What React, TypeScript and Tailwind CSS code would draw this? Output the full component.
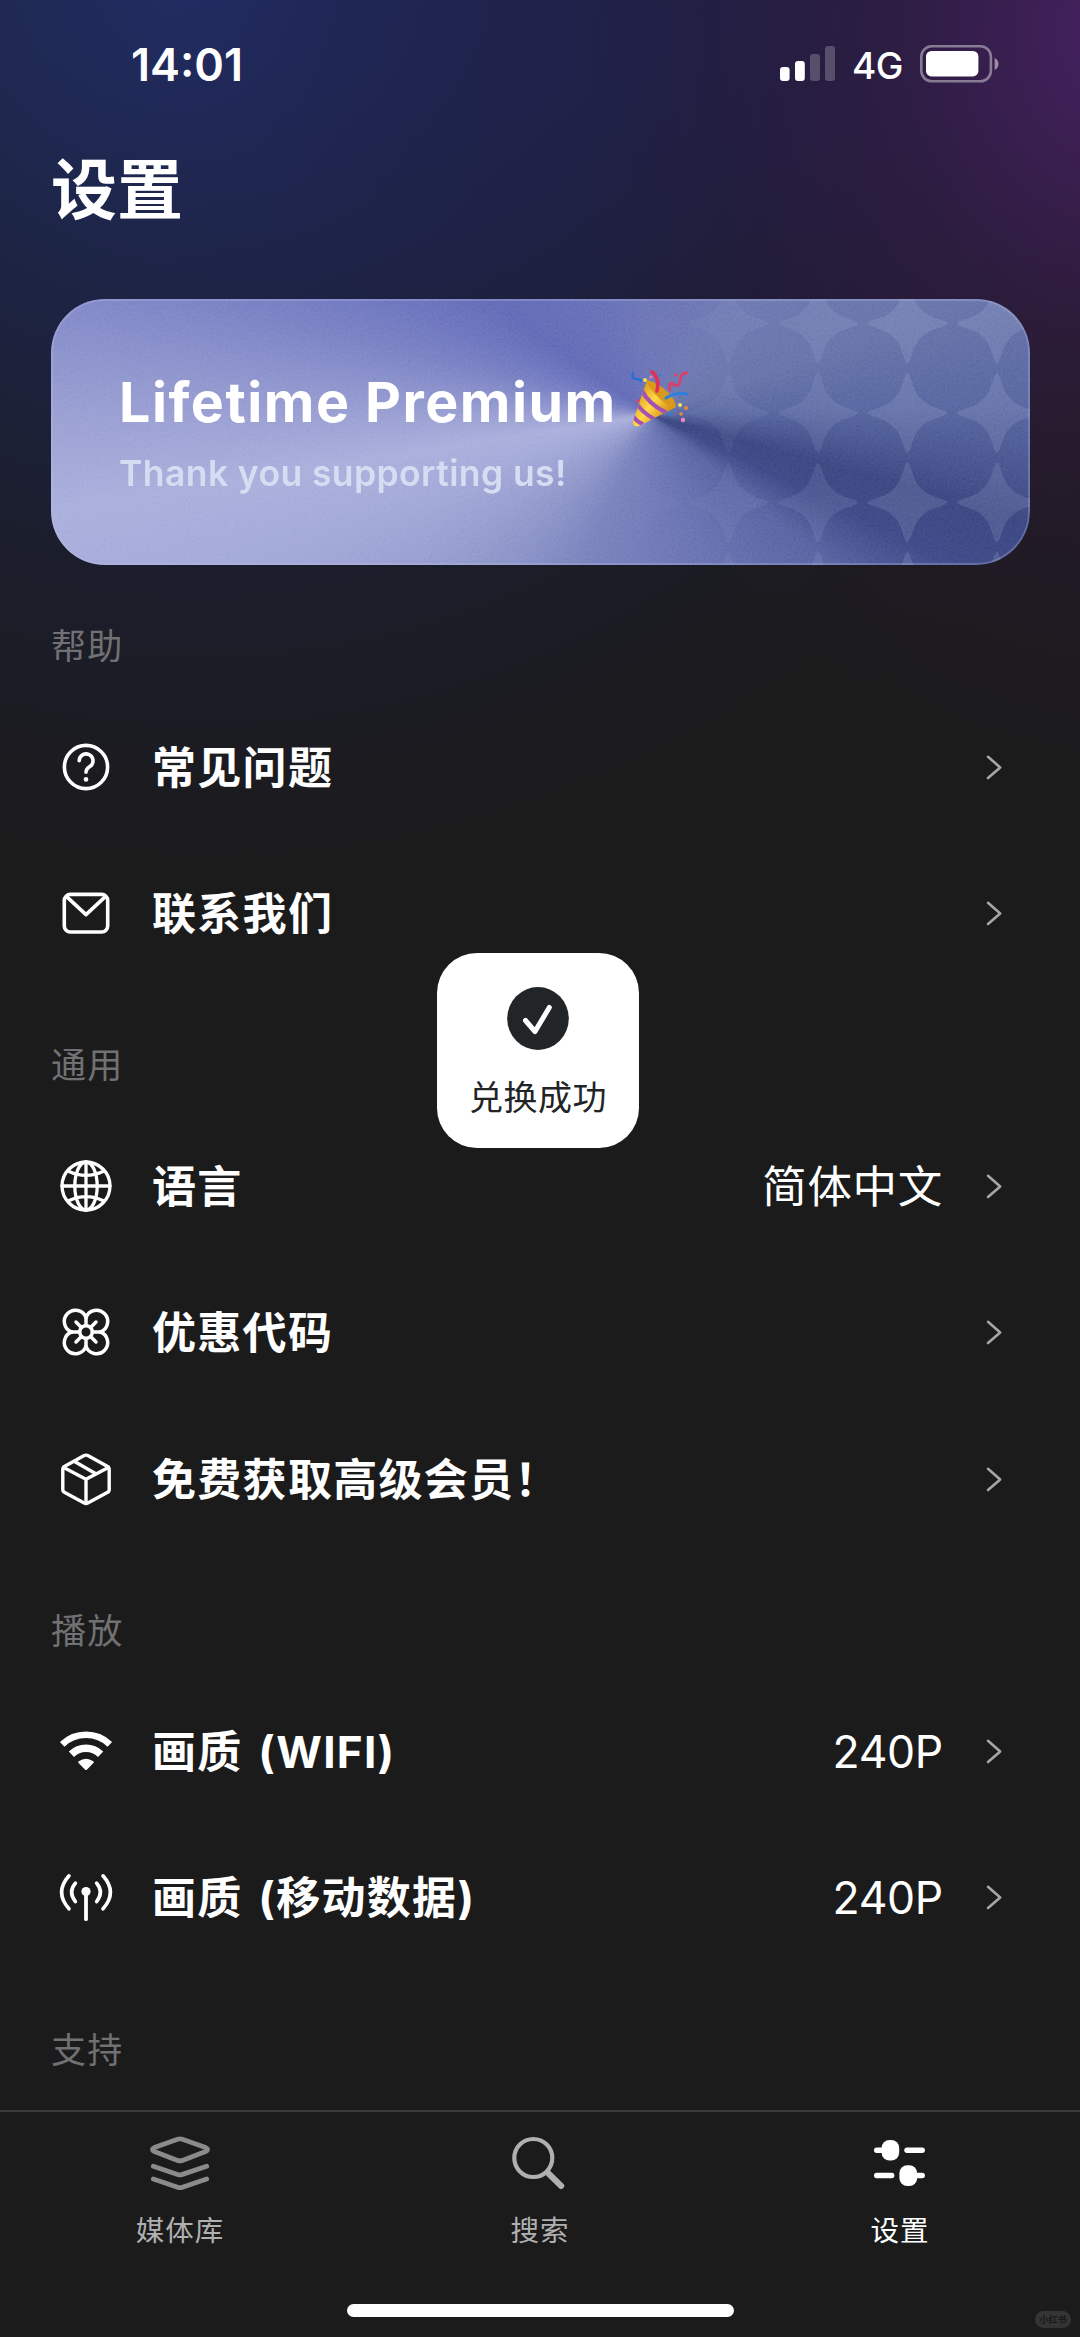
import type { ReactNode } from 'react';

type SettingItem = {
  title: string;
  icon: ReactNode;
  value?: string;
};

type SettingSection = {
  label: string;
  items: SettingItem[];
};

type RowIconProps = {
  children: ReactNode;
  strokeWidth?: number;
};

function RowIcon({ children, strokeWidth = 3.6 }: RowIconProps) {
  return (
    <svg
      viewBox="0 0 52 52"
      className="w-[52px] h-[52px] shrink-0 overflow-visible"
      fill="none"
      stroke="currentColor"
      strokeWidth={strokeWidth}
      strokeLinecap="round"
      strokeLinejoin="round"
    >
      {children}
    </svg>
  );
}

const HelpIcon = () => (
  <RowIcon>
    <circle cx="26" cy="26" r="21.6" />
    <path d="M19.2 19.8a6.9 6.9 0 1 1 10.6 5.8c-2.4 1.6-3.8 2.7-3.8 5.6" />
    <circle cx="26" cy="38.4" r="2.3" fill="currentColor" stroke="none" />
  </RowIcon>
);

const MailIcon = () => (
  <RowIcon>
    <rect x="4.3" y="7.4" width="43.4" height="37.6" rx="6" />
    <path d="M6.6 9.6 26 27.6 45.4 9.6" />
  </RowIcon>
);

const GlobeIcon = () => (
  <RowIcon strokeWidth={3.3}>
    <circle cx="26" cy="26" r="24" />
    <ellipse cx="26" cy="26" rx="11.2" ry="24" />
    <path d="M26 2v48M2 26h48M8.6 11.2q17.4 8.4 34.8 0M8.6 40.8q17.4-8.4 34.8 0" />
  </RowIcon>
);

const CloverIcon = () => (
  <RowIcon strokeWidth={3.5}>
    <path d="M26 11.6A11.2 11.2 0 1 0 11.6 26A11.2 11.2 0 1 0 26 40.4A11.2 11.2 0 1 0 40.4 26A11.2 11.2 0 1 0 26 11.6Z" />
    <circle cx="26" cy="26" r="6.3" />
    <path d="M26 11.6v8M26 32.4v8M11.6 26h8M32.4 26h8M16 16l5.4 5.4M36 16l-5.4 5.4M16 36l5.4-5.4M36 36l-5.4-5.4" />
  </RowIcon>
);

const BoxIcon = () => (
  <RowIcon strokeWidth={3.4}>
    <path d="M24.2 2.6a4 4 0 0 1 3.6 0l19.4 10.6a3.6 3.6 0 0 1 2 3.2v20a3.6 3.6 0 0 1-2 3.2L27.8 50a4 4 0 0 1-3.6 0L4.8 39.6a3.6 3.6 0 0 1-2-3.2v-20a3.6 3.6 0 0 1 2-3.2z" />
    <path d="M3.6 14.4 26 26.2l22.4-11.8M26 26.2v24M15 8.8l20.4 11.6" />
  </RowIcon>
);

const WifiIcon = () => (
  <RowIcon>
    <path d="M2.2 19.3a34.5 34.5 0 0 1 47.6 0" strokeWidth="6.6" strokeLinecap="butt" />
    <path d="M11.4 29.2a21 21 0 0 1 29.2 0" strokeWidth="7.6" strokeLinecap="butt" />
    <path d="M26 43.8 19.4 37.2q6.6-4.6 13.2 0z" fill="currentColor" strokeWidth="2.4" />
  </RowIcon>
);

const AntennaIcon = () => (
  <RowIcon>
    <circle cx="26" cy="20.6" r="4.6" fill="currentColor" stroke="none" />
    <path d="M26 21v27.2" strokeWidth="3.8" />
    <path d="M9 4.8q-14.8 16.6 0 33M43 4.8q14.8 16.6 0 33M15.4 12.2q-7.6 9 0 18.4M36.6 12.2q7.6 9 0 18.4" />
  </RowIcon>
);

const sections: SettingSection[] = [
  {
    label: '帮助',
    items: [
      { title: '常见问题', icon: <HelpIcon /> },
      { title: '联系我们', icon: <MailIcon /> },
    ],
  },
  {
    label: '通用',
    items: [
      { title: '语言', icon: <GlobeIcon />, value: '简体中文' },
      { title: '优惠代码', icon: <CloverIcon /> },
      { title: '免费获取高级会员！', icon: <BoxIcon /> },
    ],
  },
  {
    label: '播放',
    items: [
      { title: '画质 (WIFI)', icon: <WifiIcon />, value: '240P' },
      { title: '画质 (移动数据)', icon: <AntennaIcon />, value: '240P' },
    ],
  },
  { label: '支持', items: [] },
];

function StatusBar() {
  return (
    <div className="h-[128px] shrink-0 flex items-center justify-between pl-[131px] pr-[80px]">
      <span className="text-[45px] leading-none font-semibold">14:01</span>
      <div className="flex items-center">
        <svg viewBox="0 0 56 36" className="w-[56px] h-[36px]" fill="currentColor">
          <rect x="0" y="21" width="9.6" height="14" rx="3" />
          <rect x="15" y="15" width="9.8" height="20" rx="3" />
          <rect x="30" y="8" width="10" height="27" rx="3" opacity="0.22" />
          <rect x="45" y="0" width="10" height="35" rx="3" opacity="0.22" />
        </svg>
        <span className="ml-[16px] mt-[3px] text-[37px] leading-none font-medium tracking-[-0.5px] w-[52px]">4G</span>
        <svg viewBox="0 0 80 38" className="ml-[16px] w-[80px] h-[38px]" fill="currentColor">
          <rect x="1.3" y="1.3" width="69.6" height="35" rx="10.5" fill="none" stroke="currentColor" strokeWidth="2.6" opacity="0.42" />
          <rect x="6" y="6" width="52.4" height="25.4" rx="5.5" />
          <path d="M74.6 13v12c5.2-2 5.2-10 0-12z" opacity="0.5" />
        </svg>
      </div>
    </div>
  );
}

// columns and rows of the four-pointed stars on the banner
const starColumns = [588, 677.5, 767, 856.5, 946];
const starRows = [24.5, 114, 203.5, 293];

function BannerPattern() {
  return (
    <svg viewBox="0 0 979 266" preserveAspectRatio="none" className="absolute inset-0 w-full h-full">
      <defs>
        <linearGradient id="starFade" gradientUnits="userSpaceOnUse" x1="560" y1="0" x2="840" y2="0">
          <stop offset="0" stopColor="#fff" stopOpacity="0" />
          <stop offset="1" stopColor="#fff" stopOpacity="1" />
        </linearGradient>
        <mask id="starMask">
          <rect width="979" height="266" fill="url(#starFade)" />
        </mask>
        <filter id="grain" x="0" y="0" width="100%" height="100%">
          <feTurbulence type="fractalNoise" baseFrequency="0.45" numOctaves="2" stitchTiles="stitch" />
          <feColorMatrix type="matrix" values="0.6 0.6 0 0 -0.14 0.6 0.6 0 0 -0.14 0.6 0.6 0 0 -0.14 0 0 0 0 1" />
        </filter>
      </defs>
      <g mask="url(#starMask)" fill="#c5d3ee" fillOpacity="0.14">
        {starRows.map((y) =>
          starColumns.map((x) => (
            <path
              key={`${x}-${y}`}
              transform={`translate(${x} ${y})`}
              d="M0-40C4-39 5-21 14-14C21-5 39-4 40 0C39 4 21 5 14 14C5 21 4 39 0 40C-4 39-5 21-14 14C-21 5-39 4-40 0C-39-4-21-5-14-14C-5-21-4-39 0-40Z"
            />
          )),
        )}
      </g>
      <rect width="979" height="266" filter="url(#grain)" className="mix-blend-soft-light" opacity="0.25" />
    </svg>
  );
}

function PartyPopper() {
  return (
    <svg viewBox="0 0 58 58" className="-mt-[7px] w-[58px] h-[58px] shrink-0" fill="none" strokeLinecap="round">
      <defs>
        <linearGradient id="cone" x1="8" y1="24" x2="34" y2="42" gradientUnits="userSpaceOnUse">
          <stop offset="0" stopColor="#e0a01d" />
          <stop offset="0.5" stopColor="#ffd94a" />
          <stop offset="1" stopColor="#dc9a1a" />
        </linearGradient>
        <clipPath id="coneClip">
          <path d="M16 10C27 15 40 26 45 37L8 56C4 57 1 55 2 51Z" />
        </clipPath>
      </defs>
      <g clipPath="url(#coneClip)">
        <rect width="58" height="58" fill="url(#cone)" />
        <path d="M11 21Q18 34 34 42M6 34Q11 42 23 49M2 46Q5 51 11 54" stroke="#a550b5" strokeWidth="4.2" />
      </g>
      <path d="M16 10C27 12 42 24 45 35C43 40 34 34 27 27C20 20 14 13 16 10Z" fill="#d8991c" />
      <path d="M21 2C26 5 28 13 26 21" stroke="#e52e55" strokeWidth="3.6" />
      <path d="M35 28Q44 22 56 24" stroke="#2f7fe0" strokeWidth="3.2" />
      <path d="M39 20Q37 11 42 14T48 14T50 7T56 3" stroke="#d8406d" strokeWidth="2.8" />
      <path d="M2 3Q0 9 5 9T10 11" stroke="#2b6fd4" strokeWidth="2.6" />
      <circle cx="14" cy="10" r="2" fill="#f6e04e" />
      <circle cx="20" cy="7" r="1.6" fill="#ef7fa8" />
      <circle cx="29" cy="5" r="1.5" fill="#2f7fe0" />
      <circle cx="45" cy="5" r="1.8" fill="#e0436c" />
      <circle cx="7" cy="31" r="1.8" fill="#e0436c" />
      <circle cx="49" cy="35" r="2" fill="#f1e265" />
      <circle cx="55" cy="38" r="2" fill="#e58a3a" />
      <circle cx="50" cy="44" r="1.8" fill="#e58a3a" />
      <circle cx="39" cy="44" r="1.8" fill="#2f7fe0" />
      <circle cx="52" cy="50" r="2.2" fill="#ee86c6" />
    </svg>
  );
}

function PremiumBanner() {
  return (
    <div className="relative ml-[51px] mr-[50px] h-[266px] shrink-0 rounded-[54px] overflow-hidden bg-[conic-gradient(from_0deg_at_600px_116px,#6972b4_0deg,#6b76b0_40deg,#6472a8_70deg,#56649f_88deg,#38447f_106deg,#3b4785_116deg,#5562a0_130deg,#6670b0_160deg,#7780bb_205deg,#9098cb_232deg,#a2a8d8_252deg,#a8addb_261deg,#979dd1_270deg,#878eca_277deg,#7880c3_284deg,#6b73bd_293deg,#6068b5_305deg,#636cb6_325deg,#6972b4_360deg)]">
      <BannerPattern />
      <div className="absolute inset-0 rounded-[54px] border-2 border-[#b9bde8]/30" />
      <div className="relative pl-[68px] pt-[70px]">
        <div className="flex items-center h-[66px]">
          <h2 className="text-[55.5px] leading-[66px] font-bold tracking-[1.5px] whitespace-nowrap w-[512px]">Lifetime Premium</h2>
          <PartyPopper />
        </div>
        <p className="mt-[15px] text-[35.5px] leading-[48px] font-semibold text-[#d6dcf2] tracking-[0.4px]">
          Thank you supporting us!
        </p>
      </div>
    </div>
  );
}

function SettingRow({ title, icon, value }: SettingItem) {
  return (
    <li className="h-[146.4px] flex items-center pl-[60px] pr-[77px]">
      {icon}
      <span className="ml-[40px] mt-[2px] flex-1 text-[44px] leading-[60px] font-bold tracking-[1.3px] [word-spacing:4px]">
        {title}
      </span>
      {value ? (
        <span className={`mt-[2px] text-[44.5px] leading-[60px] ${value === '240P' ? 'tracking-[-0.3px]' : 'tracking-[0.7px]'}`}>
          {value}
        </span>
      ) : null}
      <svg
        viewBox="0 0 18 26"
        className="ml-[42px] w-[18px] h-[26px] text-[#a6a6a6]"
        fill="none"
        stroke="currentColor"
        strokeWidth="2.6"
        strokeLinecap="round"
        strokeLinejoin="round"
      >
        <path d="M3 2.8 15.2 13.4 3 24" />
      </svg>
    </li>
  );
}

function TabBar() {
  return (
    <nav className="h-[227px] shrink-0 flex flex-col border-t-2 border-[#3b3b3c] bg-[#1b1b1b]">
      <div className="grid grid-cols-3 text-[28.5px] leading-[40px] tracking-[1px]">
        <a className="flex flex-col items-center pt-[24px] text-[#b0b0b1]">
          <svg
            viewBox="0 0 60 54"
            className="w-[60px] h-[54px] text-[#8b8b8c]"
            fill="none"
            stroke="currentColor"
            strokeWidth="4.8"
            strokeLinecap="round"
            strokeLinejoin="round"
          >
            <path d="M27.6 3.3q2.4-.8 4.8 0L55.6 11.6q4 2 0 4L32.4 24.4q-2.4.8-4.8 0L4.4 15.6q-4-2 0-4z" />
            <path d="M3.3 30.2 27.6 38.4q2.4.8 4.8 0L56.7 30.2M3.3 43 27.6 51.2q2.4.8 4.8 0L56.7 43" />
          </svg>
          <span className="mt-[21px]">媒体库</span>
        </a>
        <a className="flex flex-col items-center pt-[24px] text-[#b0b0b1]">
          <svg viewBox="0 0 54 54" className="w-[54px] h-[54px] mr-1" fill="none" stroke="currentColor" strokeLinecap="round">
            <circle cx="22.3" cy="22" r="19" strokeWidth="4.2" />
            <path d="M36.5 36.5 50.2 50" strokeWidth="6" />
          </svg>
          <span className="mt-[21px]">搜索</span>
        </a>
        <a className="flex flex-col items-center pt-[24px] text-white">
          <svg viewBox="0 0 54 54" className="w-[54px] h-[54px]" fill="currentColor">
            <rect x="1" y="11.6" width="14" height="5.4" rx="2.7" />
            <rect x="8.6" y="4" width="17.6" height="20.6" rx="8" />
            <rect x="31.3" y="11.6" width="20.6" height="5.4" rx="2.7" />
            <rect x="1" y="36.8" width="20.4" height="5.4" rx="2.7" />
            <rect x="26.4" y="29.2" width="17.8" height="20.8" rx="8" />
            <rect x="38" y="36.8" width="13.9" height="5.4" rx="2.7" />
          </svg>
          <span className="mt-[21px]">设置</span>
        </a>
      </div>
      <div className="mt-auto mb-[20px] mx-auto w-[387px] h-[13px] rounded-full bg-white" />
    </nav>
  );
}

function Toast() {
  return (
    <div className="absolute left-[437px] top-[953px] w-[202px] h-[195px] rounded-[40px] bg-white flex flex-col items-center pt-[34px]">
      <svg viewBox="0 0 62 63" className="w-[62px] h-[63px]">
        <ellipse cx="31" cy="31.5" rx="30.8" ry="31.5" fill="#212527" />
        <path
          d="M18.5 33.5 28 44.5 42.3 20.5"
          fill="none"
          stroke="#fff"
          strokeWidth="5"
          strokeLinecap="round"
          strokeLinejoin="round"
        />
      </svg>
      <span className="mt-[24px] text-[34px] leading-[48px] tracking-[0.5px] text-[#222426] whitespace-nowrap">兑换成功</span>
    </div>
  );
}

export default function App() {
  return (
    <div className="relative w-[1080px] h-[2337px] overflow-hidden flex flex-col text-white bg-[#1b1b1b] bg-[radial-gradient(540px_760px_at_1110px_30px,rgba(76,34,106,0.85),rgba(60,28,80,0.5)_40%,rgba(46,24,64,0.2)_75%,rgba(40,24,60,0)),radial-gradient(620px_520px_at_640px_40px,rgba(34,32,84,0.5),rgba(32,30,78,0.3)_50%,rgba(30,28,60,0)),radial-gradient(1050px_960px_at_200px_-20px,rgba(34,48,106,0.95),rgba(30,41,88,0.72)_30%,rgba(28,34,72,0.36)_62%,rgba(27,28,50,0.1)_88%,rgba(27,27,27,0))] font-['Inter','Noto_Sans_CJK_SC',sans-serif]">
      <StatusBar />
      <main className="flex-1 min-h-0 overflow-hidden flex flex-col">
        <h1 className="h-[171px] shrink-0 pl-[51px] pt-4 text-[66px] leading-[92px] font-bold">设置</h1>
        <PremiumBanner />
        {sections.map((section) => (
          <section key={section.label} className="shrink-0 mt-[2.4px] -mb-[2.4px]">
            <h3 className="h-[126.2px] pl-[51px] pt-[55px] text-[35px] leading-[48px] tracking-[1.3px] text-[#717173]">
              {section.label}
            </h3>
            <ul>
              {section.items.map((item) => (
                <SettingRow key={item.title} {...item} />
              ))}
            </ul>
          </section>
        ))}
      </main>
      <TabBar />
      <Toast />
      <span className="absolute right-[9px] bottom-[9px] w-[36px] h-[17px] rounded-full bg-[#343434] text-[9px] leading-[17px] text-center font-bold text-[#191919]">
        小红书
      </span>
    </div>
  );
}
